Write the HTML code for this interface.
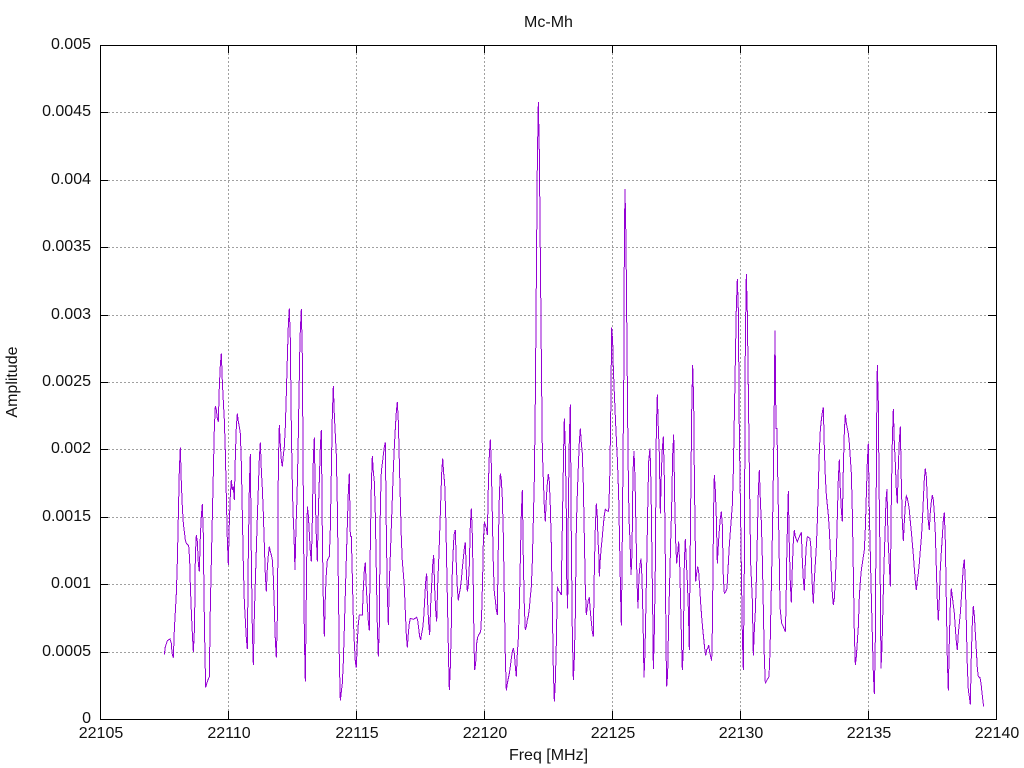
<!DOCTYPE html>
<html>
<head>
<meta charset="utf-8">
<title>Mc-Mh</title>
<style>
html,body{margin:0;padding:0;background:#fff;width:1024px;height:768px;overflow:hidden}
svg{display:block}
text{font-family:"Liberation Sans",Arial,sans-serif;font-size:16px;fill:#111}
.g{stroke:#a0a0a0;stroke-width:1;stroke-dasharray:2 2;shape-rendering:crispEdges;fill:none}
.k{stroke:#000;stroke-width:1;shape-rendering:crispEdges;fill:none}
.d{stroke:#9400d3;stroke-width:3;fill:none;shape-rendering:crispEdges}
</style>
</head>
<body>
<svg width="1024" height="768" viewBox="0 0 1024 768" xmlns="http://www.w3.org/2000/svg">
<rect width="1024" height="768" fill="#fff"/>
<path class="g" d="M100 112.5H996M100 180.5H996M100 247.5H996M100 315.5H996M100 382.5H996M100 449.5H996M100 517.5H996M100 584.5H996M100 652.5H996"/>
<path class="g" d="M228.5 45V719M356.5 45V719M484.5 45V719M612.5 45V719M740.5 45V719M868.5 45V719"/>

<g transform="translate(150 280) scale(0.33333)">
<polyline class="d" points="43,1124 46,1100 52,1082 60,1077 64,1090 66,1120 70,1133 73,1050 76,995 79,940 82,845 85,708 88,570 91,502 94,610 97,680 100,730 103,755 106,780 109,790 116,797 119,840 121,915 124,995 127,1060 130,1116 133,1055 135,940 136,825 139,765 142,785 145,850 148,875 151,770 154,710 157,672 160,765 162,950 165,1130 167,1222 172,1205 178,1190 181,980 184,845 187,710 190,580 193,445 196,378 199,390 202,415 205,425 208,320 211,255 214,220 217,305 220,365 223,420 226,515 229,650 232,780 235,855 238,725 241,645 244,600 247,630 250,620 253,660 256,530 259,440 262,400 265,425 268,440 271,460 274,550 277,700 280,855 283,965 286,1020 289,1075 292,1107 295,815 298,622 301,522 304,835 307,1045 310,1155 313,1005 316,905 319,810 322,712 325,625 328,535 331,487 334,570 337,625 340,700 343,795 346,885 349,935 352,865 355,825 358,800 361,815 364,825 367,840 370,890 373,985 376,1080 379,1133 382,1015 384,780 385,552 388,435 391,495 394,540 397,560 400,525 403,500 406,440 409,340 412,235 415,135 418,85 421,180 423,370 426,565 429,695 432,765 435,870 438,740 441,655 444,520 447,345 450,175 454,87 457,230 459,510 461,785 463,1065 466,1205 469,940 472,680 475,705 478,760 481,815 484,845 487,720 490,535 493,472 496,655 499,770 502,845 505,695 508,600 511,500 514,450 517,760 520,965 523,1070 526,950 529,880 532,840 538,830 541,745 544,575 547,405 550,318 553,405 556,465 559,525 562,675 565,905 568,1140 571,1262 574,1235 577,1210 580,1145 583,1045 586,940 589,835 592,735 595,635 598,580 601,770"/>
</g>
<g transform="translate(350 280) scale(0.33333)">
<polyline class="d" points="1,770 4,770 7,890 10,1015 13,1090 16,1145 19,1163 22,1085 25,1030 28,1005 37,1005 40,925 43,870 46,847 49,925 52,975 55,1025 58,1052 61,790 64,615 67,528 70,575 73,605 76,705 79,875 82,1040 85,1130 88,1035 91,680 94,575 97,550 100,525 103,500 106,487 109,755 112,940 115,1035 118,910 121,825 124,740 127,655 130,570 133,500 136,445 139,395 142,366 145,425 148,545 151,660 154,775 157,845 160,880 163,920 166,995 169,1065 172,1103 175,1060 178,1030 181,1015 190,1018 200,1012 203,1020 206,1045 209,1070 212,1080 215,1060 218,1045 221,1015 224,960 227,905 230,880 233,970 236,1030 239,1065 242,975 245,915 248,855 251,825 254,925 257,990 260,1025 263,915 266,845 269,760 272,670 275,580 278,535 281,580 284,610 287,700 290,850 293,1000 296,1150 298,1230 301,1160 304,1035 306,905 309,825 312,765 316,750 319,855 322,925 325,962 328,940 331,925 334,900 337,865 340,835 343,805 346,787 349,875 352,935 355,915 358,855 361,735 364,685 367,765 370,925 372,1090 374,1170 377,1150 380,1090 383,1072 386,1065 392,1055 395,1000 398,890 400,785 403,727 406,735 409,745 412,765 415,620 418,525 421,478 424,555 427,705 430,855 433,940 436,960 439,990 442,1005 445,795 448,650 451,580 454,600 457,655 460,765 463,950 466,1135 469,1232 472,1210 475,1195 478,1180 481,1160 484,1135 487,1115 490,1105 493,1120 496,1160 499,1190 502,1120 505,1075 508,980 511,840 514,700 517,630 520,840 523,980 526,1050 529,1040 532,1020 535,1008 538,985 541,950 544,920 547,845 550,720 553,597 556,355 559,0 562,-354 565,-534 568,-381 571,-75 574,230 577,510 580,597 583,680 586,725 589,655 592,610 595,582 598,605 601,680"/>
</g>
<g transform="translate(550 280) scale(0.33333)">
<polyline class="d" points="1,680 4,795 7,980 10,1170 13,1265 16,1205 19,1090 22,920 25,930 28,935 31,938 34,945 35,858 38,680 41,505 43,415 46,505 49,700 50,890 53,985 55,680 58,475 61,373 64,785 67,1060 70,1200 73,1135 76,1005 79,740 82,640 85,560 88,485 91,445 94,490 97,520 100,615 103,770 106,925 109,1005 112,980 115,960 118,952 121,995 124,1025 127,1055 130,1070 133,870 136,740 139,670 142,710 144,780 147,835 148,890 151,835 154,800 157,770 160,735 163,705 166,688 172,693 176,694 179,605 182,420 185,143 188,185 190,265 193,340 196,410 199,475 202,535 206,645 209,800 212,955 214,1037 216,870 219,545 222,220 223,-111 225,-273 228,-115 231,205 234,520 237,715 240,780 243,885 246,820 249,575 252,513 255,595 258,750 261,905 264,985 267,890 270,855 273,835 276,895 279,1015 282,1192 285,1115 288,965 291,810 293,695 296,545 300,505 303,615 306,840 309,1055 310,1167 313,1055 316,860 319,445 322,343 325,445 328,520 331,700 334,580 337,505 340,470 343,595 346,840 348,1095 350,1220 353,1180 356,1015 359,905 362,785 365,680 368,525 371,463 374,655 377,785 380,850 383,820 386,785 389,850 392,975 395,1100 397,1170 400,1105 403,845 406,777 409,845 412,905 415,985 418,1110 419,965 422,680 425,400 428,255 431,365 433,580 436,800 437,905 440,880 443,860 446,875 449,920 452,970 455,1010 458,1045 461,1075 464,1105 467,1127 470,1110 473,1105 476,1095 479,1115 482,1130 485,1142 487,1050 489,865 491,680 493,585 496,630 499,715 502,850 505,795 508,750 511,715 514,695 517,735 520,895 523,940 527,935 531,925 535,850 538,795 541,755 544,715 547,675 550,575 553,410 556,245 559,82 562,-3 565,90 568,460 571,655 574,860 577,1065 580,1170 583,860 586,180 589,-18 592,100 595,330 598,565 602,850"/>
</g>
<g transform="translate(750 280) scale(0.33333)">
<polyline class="d" points="2,850 7,960 10,1127 13,1050 16,995 19,900 22,770 25,635 28,570 31,660 34,725 37,835 40,985 43,1135 46,1210 51,1200 57,1190 60,1115 63,970 66,825 69,655 72,455 75,152 78,445 81,445 84,635 87,785 90,980 95,1030 100,1040 106,1055 108,985 110,845 113,705 115,633 118,800 121,910 124,968 127,860 130,785 133,750 136,770 142,785 148,770 154,757 157,840 160,900 163,932 166,850 169,795 172,770 180,775 183,805 185,875 188,940 190,970 193,900 196,850 199,800 202,725 205,620 208,515 211,450 214,420 217,397 220,382 223,505 226,590 229,645 232,675 235,705 238,750 241,815 244,880 247,940 250,975 253,955 256,900 259,825 262,710 265,595 268,538 271,630 274,690 277,725 280,565 283,455 286,403 289,430 292,445 295,460 298,490 301,535 304,580 307,695 310,875 313,1060 316,1155 319,1130 322,1085 325,1040 328,950 331,905 334,870 337,850 340,830 343,810 346,745 349,645 352,545 355,490 358,695 361,825 364,950 367,1065 370,1180 373,1242 376,1075 378,750 380,420 382,255 385,370 387,600 390,825 393,1165 396,1100 399,975 402,855 405,765 408,660 411,627 414,770 417,835 421,920 424,655 427,480 430,387 433,490 436,550 439,630 442,670 445,560 448,480 451,440 454,610 457,725 460,783 463,725 466,675 469,648 472,655 475,670 478,690 481,725 484,755 487,790 490,825 493,865 496,905 499,930 502,900 505,880 508,850 511,810 514,775 517,725 520,660 523,597 526,565 529,590 532,660 535,725 538,750 541,695 544,665 547,645 550,660 553,700 556,760 559,865 562,965 565,1022 568,955 571,865 574,815 577,770 580,720 583,697 586,785 589,965 592,1140 595,1232 598,1080 601,975 604,925 607,950 610,975 613,1000 616,1045 619,1085 622,1110 625,1060 628,1030 631,1000 634,955 637,905 640,860 643,838 646,905 649,1030 652,1160 655,1230 658,1250 661,1273 664,1125 667,1030 670,978 673,1005 676,1060 679,1110 682,1165 685,1190 690,1193 693,1210 696,1238 699,1265 701,1280"/>
</g>

<path class="k" d="M100.5 45.5H996.5V719.5H100.5Z"/>
<path class="k" d="M100 112.5h8M100 180.5h8M100 247.5h8M100 315.5h8M100 382.5h8M100 449.5h8M100 517.5h8M100 584.5h8M100 652.5h8"/>
<path class="k" d="M996 112.5h-8M996 180.5h-8M996 247.5h-8M996 315.5h-8M996 382.5h-8M996 449.5h-8M996 517.5h-8M996 584.5h-8M996 652.5h-8"/>
<path class="k" d="M228.5 719v-8M356.5 719v-8M484.5 719v-8M612.5 719v-8M740.5 719v-8M868.5 719v-8"/>
<path class="k" d="M228.5 45v8M356.5 45v8M484.5 45v8M612.5 45v8M740.5 45v8M868.5 45v8"/>

<g text-anchor="end">
<text x="91" y="49">0.005</text>
<text x="91" y="116">0.0045</text>
<text x="91" y="184">0.004</text>
<text x="91" y="251">0.0035</text>
<text x="91" y="319">0.003</text>
<text x="91" y="386">0.0025</text>
<text x="91" y="453">0.002</text>
<text x="91" y="521">0.0015</text>
<text x="91" y="588">0.001</text>
<text x="91" y="656">0.0005</text>
<text x="91" y="723">0</text>
</g>
<g text-anchor="middle">
<text x="101" y="738">22105</text>
<text x="229" y="738">22110</text>
<text x="357" y="738">22115</text>
<text x="485" y="738">22120</text>
<text x="613" y="738">22125</text>
<text x="741" y="738">22130</text>
<text x="869" y="738">22135</text>
<text x="997" y="738">22140</text>
<text x="548.5" y="760">Freq [MHz]</text>
<text x="548.5" y="27">Mc-Mh</text>
<text transform="translate(17 382) rotate(-90)">Amplitude</text>
</g>
</svg>
</body>
</html>
